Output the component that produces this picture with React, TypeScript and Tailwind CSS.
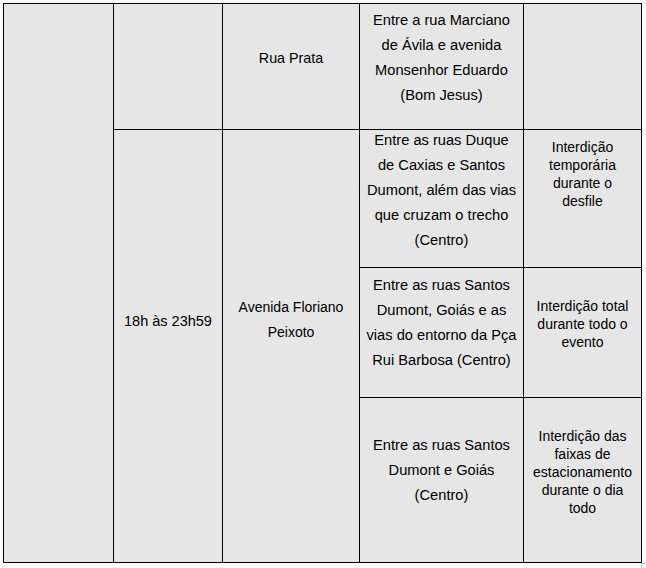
const cell = "bg-[#e6e6e6] flex flex-col items-center justify-center text-center text-black whitespace-nowrap";

export default function App() {
  return (
    <div className="relative w-[646px] h-[568px] bg-white font-['Liberation_Sans',Arial,sans-serif]">
      <div className="absolute left-[3px] top-[3px] grid grid-cols-[109px_108px_136px_163px_117px] grid-rows-[125px_137px_129px_164px] gap-px p-px bg-black">
        {/* first column, empty */}
        <div className="bg-[#e6e6e6] row-span-4" />

        {/* row 1 */}
        <div className="bg-[#e6e6e6]" />
        <div className={`${cell} pb-[17px] text-[14.3px] leading-[25px]`}>Rua Prata</div>
        <div className={`${cell} pb-[18px] text-[14.67px] leading-[25px]`}>
          <span>Entre a rua Marciano</span>
          <span>de Ávila e avenida</span>
          <span>Monsenhor Eduardo</span>
          <span>(Bom Jesus)</span>
        </div>
        <div className="bg-[#e6e6e6]" />

        {/* merged cells */}
        <div className={`${cell} row-span-3 col-start-2 row-start-2 pb-[50px] text-[14.5px] leading-[25px]`}>18h às 23h59</div>
        <div className={`${cell} row-span-3 col-start-3 row-start-2 pb-[53px] text-[14px] leading-[25px]`}>
          <span>Avenida Floriano</span>
          <span>Peixoto</span>
        </div>

        {/* row 2 */}
        <div className={`${cell} col-start-4 row-start-2 pb-[17px] text-[14.67px] leading-[25px]`}>
          <span>Entre as ruas Duque</span>
          <span>de Caxias e Santos</span>
          <span>Dumont, além das vias</span>
          <span>que cruzam o trecho</span>
          <span>(Centro)</span>
        </div>
        <div className={`${cell} col-start-5 row-start-2 pb-[49px] text-[14px] leading-[18px]`}>
          <span>Interdição</span>
          <span>temporária</span>
          <span>durante o</span>
          <span>desfile</span>
        </div>

        {/* row 3 */}
        <div className={`${cell} col-start-4 row-start-3 pb-[20px] text-[14.67px] leading-[25px]`}>
          <span>Entre as ruas Santos</span>
          <span>Dumont, Goiás e as</span>
          <span>vias do entorno da Pça</span>
          <span>Rui Barbosa (Centro)</span>
        </div>
        <div className={`${cell} col-start-5 row-start-3 pb-[17px] text-[14px] leading-[18px]`}>
          <span>Interdição total</span>
          <span>durante todo o</span>
          <span>evento</span>
        </div>

        {/* row 4 */}
        <div className={`${cell} col-start-4 row-start-4 pb-[20px] text-[14.67px] leading-[25px]`}>
          <span>Entre as ruas Santos</span>
          <span>Dumont e Goiás</span>
          <span>(Centro)</span>
        </div>
        <div className={`${cell} col-start-5 row-start-4 pb-[16px] text-[14px] leading-[18px]`}>
          <span>Interdição das</span>
          <span>faixas de</span>
          <span>estacionamento</span>
          <span>durante o dia</span>
          <span>todo</span>
        </div>
      </div>

      {/* resize mark in the corner */}
      <div className="absolute left-[641px] top-[563px] w-[5px] h-[5px] border-l border-t border-[#c8c8c8]" />
    </div>
  );
}
